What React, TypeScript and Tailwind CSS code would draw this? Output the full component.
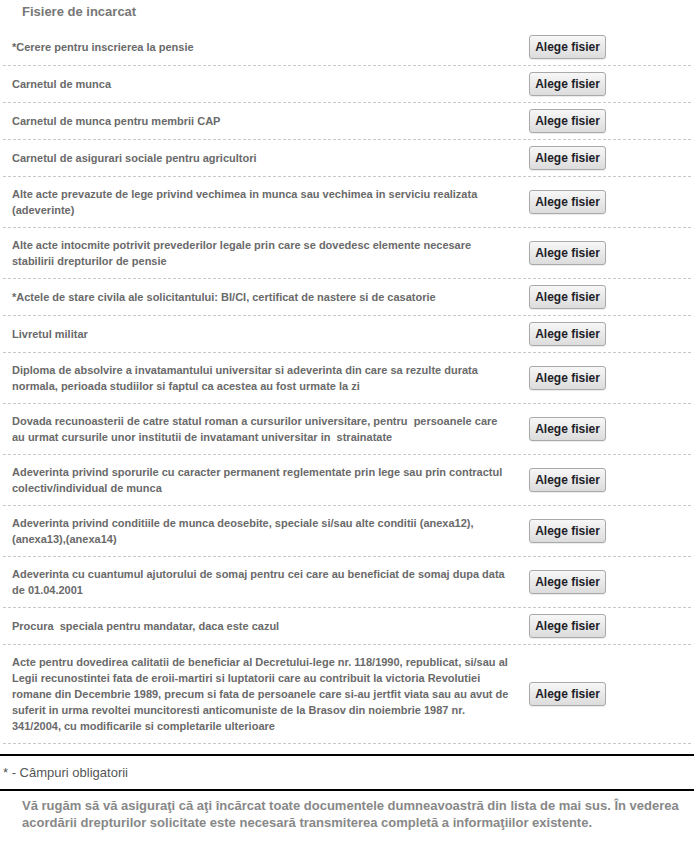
const FILES = [
  '*Cerere pentru inscrierea la pensie',
  'Carnetul de munca',
  'Carnetul de munca pentru membrii CAP',
  'Carnetul de asigurari sociale pentru agricultori',
  'Alte acte prevazute de lege privind vechimea in munca sau vechimea in serviciu realizata (adeverinte)',
  'Alte acte intocmite potrivit prevederilor legale prin care se dovedesc elemente necesare stabilirii drepturilor de pensie',
  '*Actele de stare civila ale solicitantului: BI/CI, certificat de nastere si de casatorie',
  'Livretul militar',
  'Diploma de absolvire a invatamantului universitar si adeverinta din care sa rezulte durata normala, perioada studiilor si faptul ca acestea au fost urmate la zi',
  'Dovada recunoasterii de catre statul roman a cursurilor universitare, pentru  persoanele care au urmat cursurile unor institutii de invatamant universitar in  strainatate',
  'Adeverinta privind sporurile cu caracter permanent reglementate prin lege sau prin contractul colectiv/individual de munca',
  'Adeverinta privind conditiile de munca deosebite, speciale si/sau alte conditii (anexa12),(anexa13),(anexa14)',
  'Adeverinta cu cuantumul ajutorului de somaj pentru cei care au beneficiat de somaj dupa data de 01.04.2001',
  'Procura  speciala pentru mandatar, daca este cazul',
  'Acte pentru dovedirea calitatii de beneficiar al Decretului-lege nr. 118/1990, republicat, si/sau al Legii recunostintei fata de eroii-martiri si luptatorii care au contribuit la victoria Revolutiei romane din Decembrie 1989, precum si fata de persoanele care si-au jertfit viata sau au avut de suferit in urma revoltei muncitoresti anticomuniste de la Brasov din noiembrie 1987 nr. 341/2004, cu modificarile si completarile ulterioare',
]

function FileRow({ label }: { label: string }) {
  return (
    <div className="mx-[3px] flex min-h-[37px] items-center border-b border-dashed border-[#c8c8c8]">
      <div className="w-[509px] shrink-0 whitespace-pre-wrap py-[9px] pl-[9px] text-[11px] font-bold leading-[16px] text-[#6a6a6a]">
        {label}
      </div>
      <div className="ml-[17px] flex items-center">
        <button
          type="button"
          className="h-[24px] w-[77px] rounded-[3px] border border-[#a9a9a9] bg-gradient-to-b from-[#f7f7f7] to-[#dcdcdc] text-[12px] font-bold text-[#1e1e28] shadow-[0_1px_1px_rgba(0,0,0,0.08)]"
        >
          Alege fisier
        </button>
      </div>
    </div>
  )
}

export default function App() {
  return (
    <div className="w-[694px] bg-white font-['Liberation_Sans',Arial,sans-serif]">
      <h2 className="pl-[22px] pt-[3px] text-[13px] font-bold leading-[18px] text-[#777]">Fisiere de incarcat</h2>
      <div className="mt-[8px]">
        {FILES.map((f) => (
          <FileRow key={f} label={f} />
        ))}
      </div>
      <div className="mt-[10px] border-y-2 border-black py-[8px] pl-[3px] text-[13px] leading-[17px] text-[#555]">
        * - Câmpuri obligatorii
      </div>
      <p className="pl-[22px] pr-[6px] pt-[6px] text-[13px] font-bold leading-[17px] text-[#888]">
        Vă rugăm să vă asiguraţi că aţi încărcat toate documentele dumneavoastră din lista de mai sus. În vederea
        acordării drepturilor solicitate este necesară transmiterea completă a informaţiilor existente.
      </p>
    </div>
  )
}
